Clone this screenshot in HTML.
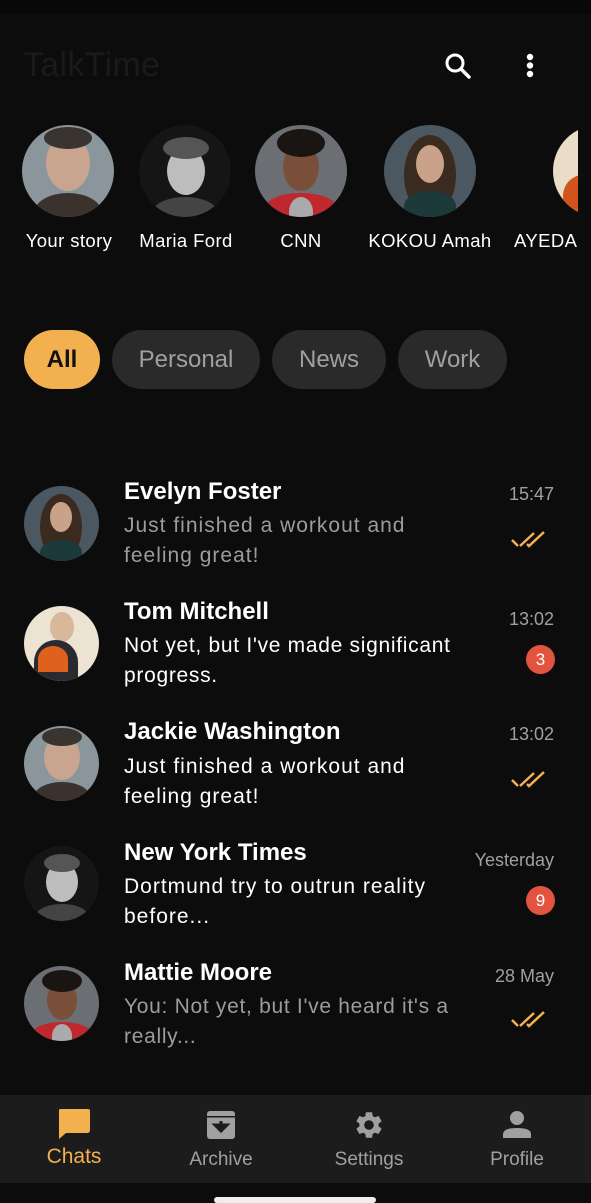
<!DOCTYPE html>
<html><head><meta charset="utf-8"><style>
*{margin:0;padding:0;box-sizing:border-box}
body{width:591px;height:1201px;background:#0c0c0c;font-family:"Liberation Sans",sans-serif;position:relative;overflow:hidden;color:#fff}
.status{position:absolute;left:0;top:0;width:591px;height:14px;background:#080808}
.title{position:absolute;left:23px;top:46px;font-size:34px;font-weight:500;color:#1a1a1a;letter-spacing:0.3px}
.av{position:absolute;border-radius:50%;overflow:hidden}
.av .h{position:absolute;border-radius:50%}
.av .b{position:absolute;border-radius:50% 50% 0 0}
.sn{position:absolute;top:230px;font-size:18.5px;color:#fff;text-align:center;width:130px;white-space:nowrap;letter-spacing:0.4px}
.chip{position:absolute;top:330px;height:59px;border-radius:30px;background:#2a2a2a;color:#a0a0a0;font-size:24px;line-height:59px;text-align:center}
.name{position:absolute;left:124px;font-size:24px;font-weight:bold;color:#fff}
.msg{position:absolute;left:124px;font-size:21px;line-height:30px;width:380px;letter-spacing:1px}
.time{position:absolute;right:37px;font-size:18px;color:#a0a0a0}
.badge{position:absolute;left:526px;width:29px;height:29px;border-radius:50%;background:#e2543f;color:#fff;font-size:17px;text-align:center;line-height:29px}
.chk{position:absolute;left:510px}
.nav{position:absolute;left:0;top:1095px;width:591px;height:88px;background:#1c1c1c}
.nl{position:absolute;top:1149px;font-size:19px;color:#a0a0a0;text-align:center;width:120px}
.pill{position:absolute;left:214px;top:1197px;width:162px;height:6px;border-radius:3px;background:#eee}
</style></head><body>
<div class="status"></div>
<div class="title">TalkTime</div>
<svg style="position:absolute;left:443px;top:51px" width="30" height="30" viewBox="0 0 30 30"><circle cx="12" cy="12" r="8" fill="none" stroke="#fff" stroke-width="3"/><line x1="18" y1="18" x2="26" y2="26" stroke="#fff" stroke-width="3.5" stroke-linecap="round"/></svg>
<svg style="position:absolute;left:524px;top:52px" width="12" height="28"><circle cx="6" cy="5" r="3.2" fill="#fff"/><circle cx="6" cy="13.5" r="3.2" fill="#fff"/><circle cx="6" cy="22" r="3.2" fill="#fff"/></svg>

<div class="av" style="left:22px;top:125px;width:92px;height:92px;background:#8a969c"><div class="h" style="left:24px;top:10px;width:44px;height:56px;background:#c9a590"></div><div class="h" style="left:22px;top:2px;width:48px;height:22px;background:#3a3430"></div><div class="b" style="left:12px;top:68px;width:68px;height:40px;background:#3b322e"></div></div>
<div class="av" style="left:139px;top:125px;width:92px;height:92px;background:#151515"><div class="h" style="left:28px;top:22px;width:38px;height:48px;background:#bdbdbd"></div><div class="h" style="left:24px;top:12px;width:46px;height:22px;background:#555"></div><div class="b" style="left:14px;top:72px;width:64px;height:30px;background:#444"></div></div>
<div class="av" style="left:255px;top:125px;width:92px;height:92px;background:#6b6f73"><div class="h" style="left:28px;top:18px;width:36px;height:48px;background:#7a4f3a"></div><div class="h" style="left:22px;top:4px;width:48px;height:28px;background:#1a1412"></div><div class="b" style="left:10px;top:68px;width:72px;height:30px;background:#c0282d"></div><div class="b" style="left:34px;top:72px;width:24px;height:30px;background:#aaa"></div></div>
<div class="av" style="left:384px;top:125px;width:92px;height:92px;background:#4b5862"><div class="h" style="left:20px;top:10px;width:52px;height:80px;background:#3a2a20"></div><div class="h" style="left:32px;top:20px;width:28px;height:38px;background:#caa189"></div><div class="b" style="left:20px;top:66px;width:52px;height:30px;background:#1d3a3a"></div></div>
<div style="position:absolute;left:553px;top:125px;width:25px;height:92px;overflow:hidden"><div class="av" style="left:0;top:0;width:92px;height:92px;background:#e9ddc8"><div class="b" style="left:10px;top:50px;width:40px;height:42px;background:#d2541c"></div></div></div>
<div class="sn" style="left:4px">Your story</div>
<div class="sn" style="left:121px">Maria Ford</div>
<div class="sn" style="left:236px">CNN</div>
<div class="sn" style="left:365px">KOKOU Amah</div>
<div style="position:absolute;left:514px;top:230px;width:64px;overflow:hidden;font-size:18.5px;white-space:nowrap;letter-spacing:0.4px">AYEDAN</div>

<div class="chip" style="left:24px;width:76px;background:#f2b04e;color:#111;font-weight:bold">All</div>
<div class="chip" style="left:112px;width:148px">Personal</div>
<div class="chip" style="left:272px;width:114px">News</div>
<div class="chip" style="left:398px;width:109px">Work</div>

<div class="av" style="left:24px;top:486px;width:75px;height:75px;background:#4b5862"><div class="h" style="left:16px;top:8px;width:42px;height:66px;background:#3a2a20"></div><div class="h" style="left:26px;top:16px;width:22px;height:30px;background:#caa189"></div><div class="b" style="left:16px;top:54px;width:42px;height:24px;background:#1d3a3a"></div></div>
<div class="name" style="top:478px">Evelyn Foster</div>
<div class="msg" style="top:511px;color:#9c9c9c">Just finished a workout and<br>feeling great!</div>
<div class="time" style="top:484px">15:47</div>
<svg class="chk" style="top:528px" width="36" height="24" viewBox="0 0 36 24"><path d="M2 12 L8 18 M10 18 L24 5 M17 16 L19 18 L34 4" fill="none" stroke="#f2b04e" stroke-width="2.5"/></svg>

<div class="av" style="left:24px;top:606px;width:75px;height:75px;background:#ece3d2"><div class="h" style="left:26px;top:6px;width:24px;height:30px;background:#d8b89a"></div><div class="b" style="left:10px;top:34px;width:44px;height:44px;background:#2a2a30"></div><div class="b" style="left:14px;top:40px;width:30px;height:26px;background:#e0601e"></div></div>
<div class="name" style="top:598px">Tom Mitchell</div>
<div class="msg" style="top:631px;color:#fff;letter-spacing:0.7px">Not yet, but I've made significant<br>progress.</div>
<div class="time" style="top:609px">13:02</div>
<div class="badge" style="top:645px">3</div>

<div class="av" style="left:24px;top:726px;width:75px;height:75px;background:#8a969c"><div class="h" style="left:20px;top:8px;width:36px;height:46px;background:#c9a590"></div><div class="h" style="left:18px;top:2px;width:40px;height:18px;background:#3a3430"></div><div class="b" style="left:10px;top:56px;width:56px;height:30px;background:#3b322e"></div></div>
<div class="name" style="top:718px">Jackie Washington</div>
<div class="msg" style="top:752px;color:#fff">Just finished a workout and<br>feeling great!</div>
<div class="time" style="top:724px">13:02</div>
<svg class="chk" style="top:768px" width="36" height="24" viewBox="0 0 36 24"><path d="M2 12 L8 18 M10 18 L24 5 M17 16 L19 18 L34 4" fill="none" stroke="#f2b04e" stroke-width="2.5"/></svg>

<div class="av" style="left:24px;top:846px;width:75px;height:75px;background:#151515"><div class="h" style="left:22px;top:16px;width:32px;height:40px;background:#bdbdbd"></div><div class="h" style="left:20px;top:8px;width:36px;height:18px;background:#555"></div><div class="b" style="left:12px;top:58px;width:52px;height:24px;background:#444"></div></div>
<div class="name" style="top:839px">New York Times</div>
<div class="msg" style="top:872px;color:#fff">Dortmund try to outrun reality<br>before...</div>
<div class="time" style="top:850px">Yesterday</div>
<div class="badge" style="top:886px">9</div>

<div class="av" style="left:24px;top:966px;width:75px;height:75px;background:#6b6f73"><div class="h" style="left:23px;top:14px;width:30px;height:40px;background:#7a4f3a"></div><div class="h" style="left:18px;top:4px;width:40px;height:22px;background:#1a1412"></div><div class="b" style="left:8px;top:56px;width:60px;height:24px;background:#c0282d"></div><div class="b" style="left:28px;top:58px;width:20px;height:24px;background:#aaa"></div></div>
<div class="name" style="top:959px">Mattie Moore</div>
<div class="msg" style="top:992px;color:#9c9c9c;letter-spacing:0.7px">You: Not yet, but I've heard it's a<br>really...</div>
<div class="time" style="top:966px">28 May</div>
<svg class="chk" style="top:1008px" width="36" height="24" viewBox="0 0 36 24"><path d="M2 12 L8 18 M10 18 L24 5 M17 16 L19 18 L34 4" fill="none" stroke="#f2b04e" stroke-width="2.5"/></svg>

<div class="nav"></div>
<svg style="position:absolute;left:57px;top:1109px" width="34" height="32" viewBox="0 0 34 32"><path d="M3 0 H31 Q33 0 33 2 V21 Q33 24 30 24 H9 L2 30 V2 Q2 0 3 0Z" fill="#f2b04e"/></svg>
<svg style="position:absolute;left:206px;top:1110px" width="30" height="30" viewBox="0 0 30 30"><rect x="1" y="1" width="28" height="28" rx="3" fill="#a0a0a0"/><rect x="1" y="6" width="28" height="1.5" fill="#1c1c1c"/><path d="M15 11 V18 M9 15 L15 21 L21 15Z" fill="#1c1c1c" stroke="#1c1c1c" stroke-width="3"/></svg>
<svg style="position:absolute;left:353px;top:1109px" width="32" height="32" viewBox="0 0 24 24"><path fill="#a0a0a0" d="M19.14 12.94c.04-.3.06-.61.06-.94 0-.32-.02-.64-.07-.94l2.03-1.58a.49.49 0 0 0 .12-.61l-1.92-3.32a.49.49 0 0 0-.59-.22l-2.390.96c-.5-.38-1.03-.7-1.62-.94l-.36-2.54a.48.48 0 0 0-.48-.41h-3.84c-.24 0-.43.17-.47.41l-.36 2.54c-.59.24-1.13.57-1.62.94l-2.39-.96a.48.48 0 0 0-.59.22L2.74 8.87c-.12.21-.08.47.12.61l2.03 1.58c-.05.3-.09.63-.09.94s.02.64.07.94l-2.03 1.58a.49.49 0 0 0-.12.61l1.92 3.32c.12.22.37.29.59.22l2.39-.96c.5.38 1.03.7 1.62.94l.36 2.54c.05.24.24.41.48.41h3.84c.24 0 .44-.17.47-.41l.36-2.54c.59-.24 1.13-.56 1.62-.94l2.39.96c.22.08.47 0 .59-.22l1.92-3.32c.12-.22.07-.47-.12-.61l-2.01-1.58zM12 15.6A3.6 3.6 0 1 1 12 8.4a3.6 3.6 0 0 1 0 7.2z"/></svg>
<svg style="position:absolute;left:501px;top:1110px" width="32" height="30" viewBox="0 0 32 30"><circle cx="16" cy="8" r="7" fill="#a0a0a0"/><path d="M2 28 V24 Q2 18 16 18 Q30 18 30 24 V28Z" fill="#a0a0a0"/></svg>
<div class="nl" style="left:14px;top:1145px;color:#f2b04e;font-size:21px">Chats</div>
<div class="nl" style="left:161px">Archive</div>
<div class="nl" style="left:309px">Settings</div>
<div class="nl" style="left:457px">Profile</div>
<div class="pill"></div>
</body></html>
